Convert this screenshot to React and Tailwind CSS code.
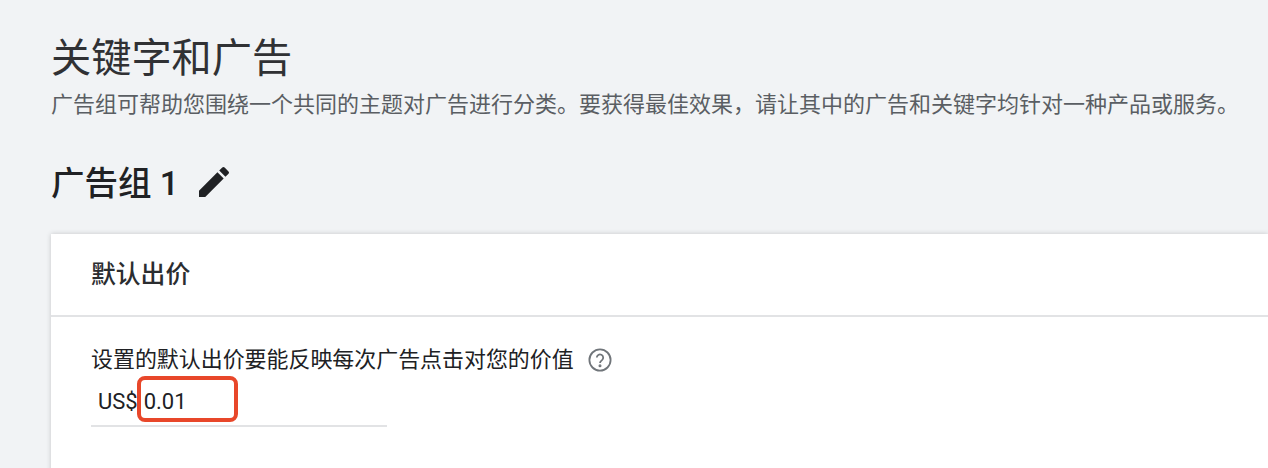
const cjk = "font-['Roboto','Noto_Sans_CJK_SC',sans-serif]";

export default function App() {
  return (
    <div className={`h-[468px] w-[1268px] overflow-hidden bg-[#f1f3f5] pl-[51px] pt-[34px] ${cjk}`}>
      <h1 className="text-[40.2px] leading-[50px] font-normal text-[#303134]">关键字和广告</h1>
      <p className="mt-[7px] whitespace-nowrap text-[22px] leading-[28px] font-normal text-[#5a5e63]">
        广告组可帮助您围绕一个共同的主题对广告进行分类。要获得最佳效果，请让其中的广告和关键字均针对一种产品或服务。
      </p>
      <div className="mt-[43px] flex h-[44px] items-center">
        <h2 className="text-[33.5px] leading-[44px] font-medium text-[#202124]">广告组 1</h2>
        <svg className="ml-[15px] mt-[-4px] h-[40px] w-[40px]" viewBox="0 0 24 24" fill="#202124">
          <path d="M3 17.25V21h3.75L17.81 9.94l-3.75-3.75L3 17.25zM20.71 7.04a1 1 0 0 0 0-1.41l-2.34-2.34a1 1 0 0 0-1.41 0l-1.83 1.83 3.75 3.75 1.83-1.83z" />
        </svg>
      </div>
      <div className="mt-[28px] h-[260px] bg-white shadow-[0_0_5px_rgba(0,0,0,0.18)]">
        <div className="flex h-[83px] items-center border-b-2 border-[#e2e3e5] pl-[40px] text-[24.8px] font-medium text-[#2b2d30]">
          默认出价
        </div>
        <div className="pl-[40px] pt-[29px]">
          <div className="flex h-[28px] items-center">
            <span className="text-[21.95px] leading-[28px] font-normal text-[#202124]">设置的默认出价要能反映每次广告点击对您的价值</span>
            <svg className="ml-[14px] h-[24px] w-[24px]" viewBox="0 0 24 24" fill="none" stroke="#70757a" strokeWidth="1.8">
              <circle cx="12" cy="12" r="10.6" />
              <path d="M8.8 9.6a3.2 3.2 0 1 1 5.2 2.5c-1.2.9-2 1.5-2 3" />
              <circle cx="12" cy="17.8" r="0.6" fill="#70757a" />
            </svg>
          </div>
          <div className="relative mt-[3px] flex h-[50px] w-[296px] items-center border-b-2 border-[#e2e3e5] pl-[7px] text-[22px] text-[#202124]">
            <span>US$</span>
            <span className="ml-[6px]">0.01</span>
            <div className="absolute left-[46px] top-[-1px] h-[46px] w-[101px] rounded-[8px] border-[4px] border-[#e8472a]" />
          </div>
        </div>
      </div>
    </div>
  );
}
